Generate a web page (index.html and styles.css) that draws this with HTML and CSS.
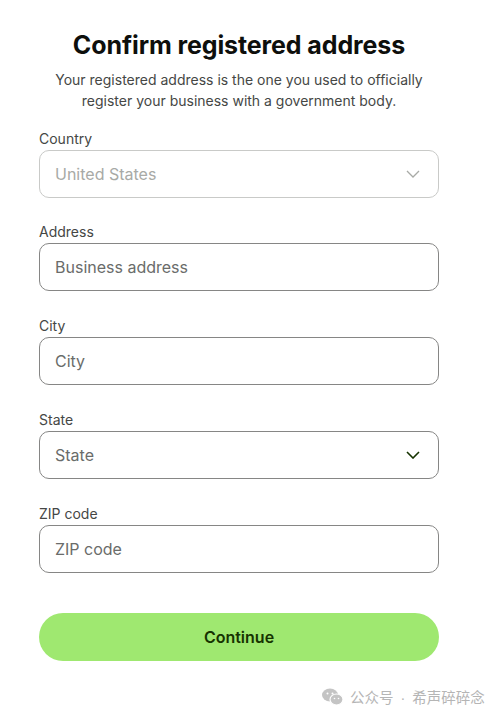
FILE: index.html
```html
<!DOCTYPE html>
<html>
<head>
<meta charset="utf-8">
<link rel="stylesheet" href="styles.css">
</head>
<body>
<div class="page">
  <h1 class="title">Confirm registered address</h1>
  <p class="subtitle">Your registered address is the one you used to officially register your business with a government body.</p>
  <form class="form">
    <div class="field first">
      <label class="label">Country</label>
      <div class="input disabled">
        <span class="value">United States</span>
        <svg class="chev" width="14" height="8" viewBox="0 0 14 8"><path d="M1 1l6 6 6-6" fill="none" stroke="currentColor" stroke-width="1.3"/></svg>
      </div>
    </div>
    <div class="field">
      <label class="label">Address</label>
      <div class="input"><span class="placeholder">Business address</span></div>
    </div>
    <div class="field">
      <label class="label">City</label>
      <div class="input"><span class="placeholder">City</span></div>
    </div>
    <div class="field">
      <label class="label">State</label>
      <div class="input select">
        <span class="placeholder">State</span>
        <svg class="chev dark" width="14" height="8" viewBox="0 0 14 8"><path d="M1 1l6 6 6-6" fill="none" stroke="currentColor" stroke-width="1.6"/></svg>
      </div>
    </div>
    <div class="field">
      <label class="label">ZIP code</label>
      <div class="input"><span class="placeholder">ZIP code</span></div>
    </div>
    <button type="button" class="btn">Continue</button>
  </form>
  <div class="watermark">
    <svg width="22" height="18" viewBox="0 0 22 18"><ellipse cx="8" cy="7" rx="8" ry="6.5" fill="#c4c4c4"/><ellipse cx="14.5" cy="11.5" rx="6.5" ry="5.5" fill="#c4c4c4" stroke="#fff" stroke-width="1.2"/><circle cx="5.5" cy="5.5" r="1" fill="#fff"/><circle cx="10.5" cy="5.5" r="1" fill="#fff"/><circle cx="12.5" cy="10.5" r="0.8" fill="#fff"/><circle cx="16.5" cy="10.5" r="0.8" fill="#fff"/></svg>
    <span>公众号<span class="dot">·</span>希声碎碎念</span>
  </div>
</div>
</body>
</html>
```
FILE: styles.css
```css
* { box-sizing: border-box; }
html, body { margin: 0; padding: 0; background: #fff; }
body { font-family: Inter, "Noto Sans CJK SC", sans-serif; color: #0e0f0c; }
.page { width: 502px; height: 720px; position: relative; padding-top: 28px; }
.title {
  margin: 0 0 0 39px; width: 400px; text-align: center;
  font-size: 25px; font-weight: 700; line-height: 34px; letter-spacing: -0.1px;
  color: #0e0f0c;
}
.subtitle {
  margin: 7px 0 0 39px; width: 400px; text-align: center;
  font-size: 14px; line-height: 21px; color: #454745;
}
.form { margin: 19px 0 0 39px; width: 400px; display: flex; flex-direction: column; }
.field { display: flex; flex-direction: column; margin-bottom: 26px; }
.field.first { margin-bottom: 25px; }
.label { font-size: 14px; line-height: 18px; color: #454745; margin-bottom: 2px; }
.input {
  height: 48px; border: 1px solid #868685; border-radius: 10px;
  display: flex; align-items: center; justify-content: space-between;
  padding: 0 16px 0 15px; font-size: 16px;
}
.input.disabled { border-color: #c9cac8; }
.input.disabled .value { color: #a8aaa6; }
.placeholder { color: #6a6c6a; }
.chev { color: #a8aaa6; margin-right: 2px; }
.chev.dark { color: #163300; }
.btn {
  margin-top: 14px; height: 48px; border: 0; border-radius: 24px;
  background: #9fe870; color: #163300; font-family: Inter, sans-serif;
  font-size: 16px; font-weight: 600;
}
.watermark {
  position: absolute; left: 322px; top: 686px;
  display: flex; align-items: center; gap: 6px;
  font-size: 14.5px; color: #b5b5b5; font-family: "Noto Sans CJK SC", sans-serif;
}
.dot { font-family: "Liberation Sans", sans-serif; margin: 0 7px; }
```
